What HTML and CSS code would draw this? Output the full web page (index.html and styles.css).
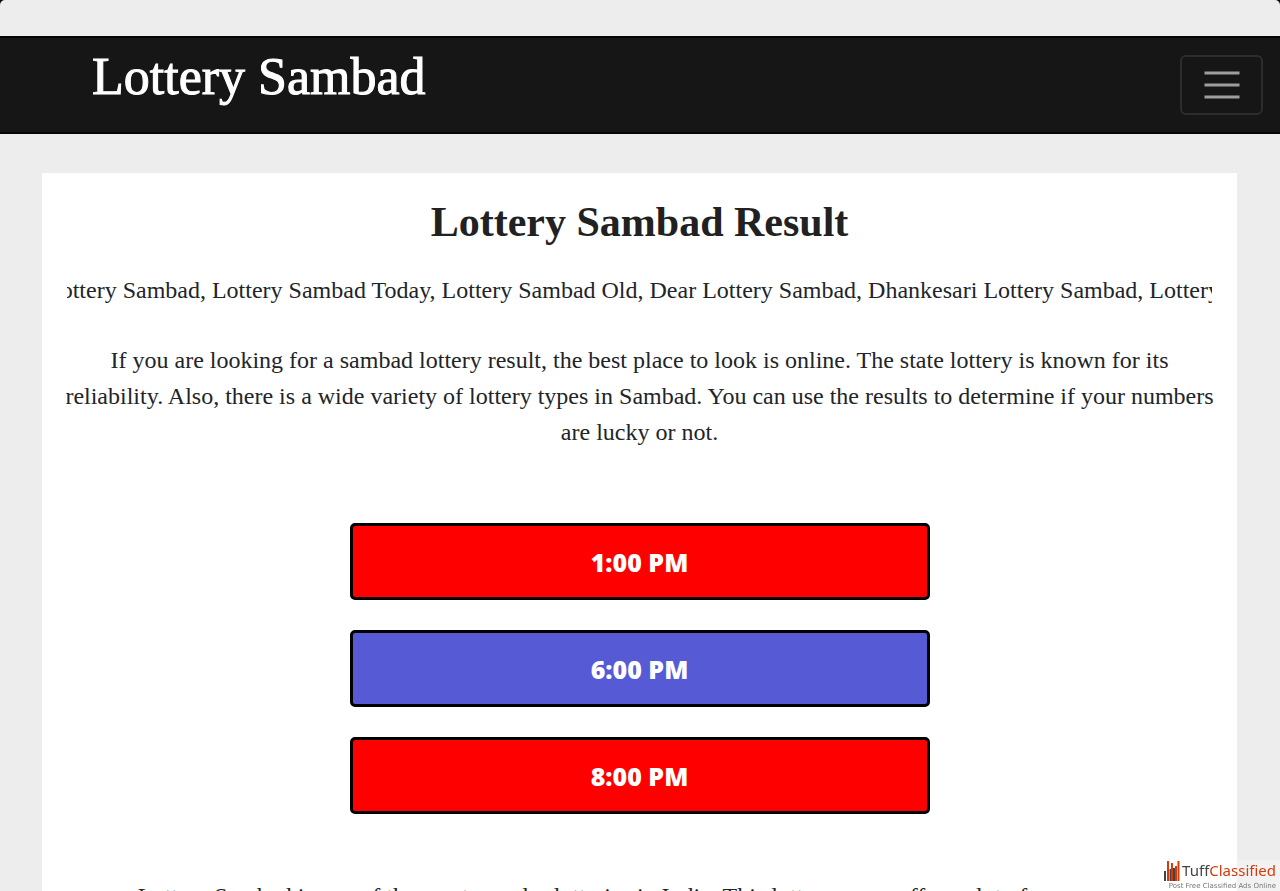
FILE: index.html
```html
<!DOCTYPE html>
<html lang="en">
<head>
    <meta charset="UTF-8">
    <meta name="viewport" content="width=device-width, initial-scale=1.0">
    <title>Lottery Sambad Result</title>
    <link rel="stylesheet" href="styles.css">
</head>
<body>
    <div class="window">
        <nav class="navbar">
            <a class="brand" href="#">Lottery Sambad</a>
            <button class="toggler" type="button" aria-label="Toggle navigation">
                <svg width="48" height="48" viewBox="0 0 48 48" aria-hidden="true">
                    <path d="M6.500 12H41.500M6.500 24H41.500M6.500 36H41.500" stroke="#9e9e9e" stroke-width="3"/>
                </svg>
            </button>
        </nav>

        <main class="card">
            <h1>Lottery Sambad Result</h1>
            <div class="ticker">
                <span class="ticker-text">Lottery Sambad, Lottery Sambad Today, Lottery Sambad Old, Dear Lottery Sambad, Dhankesari Lottery Sambad, Lottery</span>
            </div>
            <p>If you are looking for a sambad lottery result, the best place to look is online. The state lottery is known for its reliability. Also, there is a wide variety of lottery types in Sambad. You can use the results to determine if your numbers are lucky or not.</p>

            <div class="times">
                <button class="time" type="button">1:00 PM</button>
                <button class="time evening" type="button">6:00 PM</button>
                <button class="time" type="button">8:00 PM</button>
            </div>

            <p>Lottery Sambad is one of the most popular lotteries in India. This lottery game offers a lot of money as a</p>
        </main>
    </div>

    <a class="badge" href="#">
        <span class="badge-name">
            <svg width="16" height="21" viewBox="0 0 16 21" aria-hidden="true">
                <path d="M1 11V21M6.500 9V21M10 8V21" stroke="#444" stroke-width="2"/>
                <path d="M4 1V21M8 3V21M12 6V21M14.500 1V21" stroke="#d63a0c" stroke-width="2"/>
            </svg>
            <span>Tuff<span class="accent">Classified</span></span>
        </span>
        <span class="badge-note">Post Free Classified Ads Online</span>
    </a>
</body>
</html>
```
FILE: styles.css
```css
* {
    box-sizing: border-box;
}
body {
    margin: 0;
    background: #050510;
    color: #212529;
    font-family: "Liberation Serif", "Times New Roman", serif;
    font-size: 24px;
    line-height: 36px;
}
.window {
    height: 100vh;
    overflow: hidden;
    padding-top: 36px;
    background: #ededed;
    border-radius: 5px 5px 0 0;
}
.navbar {
    display: flex;
    justify-content: space-between;
    align-items: flex-start;
    padding: 17px 17px 17px 92px;
    background: #161616;
    border-top: 2px solid #050505;
    border-bottom: 2px solid #050505;
}
.brand {
    color: #fff;
    font-size: 52px;
    line-height: 44px;
    text-decoration: none;
    -webkit-text-stroke: 1px #fff;
}
.toggler {
    display: flex;
    align-items: center;
    justify-content: center;
    width: 83px;
    height: 60px;
    padding: 0;
    background: none;
    border: 2px solid #2d2d2d;
    border-radius: 6px;
}
.card {
    margin: 39px 43px 0 42px;
    padding: 24px 20px;
    background: #fff;
    text-align: center;
}
h1 {
    margin: 0;
    color: #212121;
    font-size: 42px;
    line-height: 50px;
}
.ticker {
    margin: 25px 5px 0;
    overflow: hidden;
    text-align: left;
    white-space: nowrap;
}
.ticker-text {
    margin-left: -21px;
}
p {
    margin: 34px 0 0;
}
.times {
    display: flex;
    flex-direction: column;
    align-items: center;
    gap: 30px;
    margin: 73px 0 64px;
}
.time {
    width: 580px;
    max-width: 100%;
    height: 77px;
    background: #f00;
    border: 3px solid #000;
    border-radius: 5px;
    color: #fff;
    font-family: "Noto Sans", sans-serif;
    font-size: 25px;
    font-weight: 900;
}
.evening {
    background: #565ad5;
}
.badge {
    position: fixed;
    right: 0;
    bottom: 0;
    padding: 0 4px 0 0;
    background: rgba(255, 255, 255, 0.3);
    color: #444;
    font-family: "Noto Sans", sans-serif;
    text-decoration: none;
}
.badge-name {
    display: flex;
    align-items: flex-end;
    justify-content: flex-end;
    font-size: 15px;
    line-height: 21px;
}
.badge-name svg {
    margin-right: 2px;
}
.accent {
    color: #d63a0c;
}
.badge-note {
    display: block;
    color: #777;
    font-family: "DejaVu Sans", sans-serif;
    font-size: 7px;
    line-height: 10px;
    text-align: right;
}
```
